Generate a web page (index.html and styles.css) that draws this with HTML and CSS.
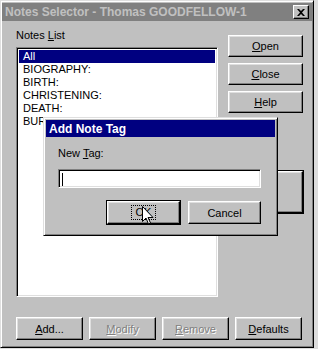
FILE: index.html
```html
<!DOCTYPE html>
<html lang="en">
<head>
    <meta charset="UTF-8">
    <title>Notes Selector</title>
    <link rel="stylesheet" href="styles.css">
</head>
<body>
    <div class="window">
        <div class="titlebar inactive">
            <span class="title">Notes Selector - Thomas GOODFELLOW-1</span>
            <span class="close-btn">
                <svg width="8" height="7" viewBox="0 0 8 7"><path d="M0 0h2l2 2 2-2h2L5 3.5 8 7H6L4 5 2 7H0l3-3.5z" fill="#000"/></svg>
            </span>
        </div>
        <div class="body">
            <div class="main">
                <div class="list-col">
                    <div class="label">Notes <u>L</u>ist</div>
                    <div class="listbox sunken">
                        <div class="item selected">All</div>
                        <div class="item">BIOGRAPHY:</div>
                        <div class="item">BIRTH:</div>
                        <div class="item">CHRISTENING:</div>
                        <div class="item">DEATH:</div>
                        <div class="item">BUR</div>
                    </div>
                </div>
                <div class="btn-col">
                    <div class="btn"><u>O</u>pen</div>
                    <div class="btn"><u>C</u>lose</div>
                    <div class="btn"><u>H</u>elp</div>
                    <div class="btn hidden-btn"></div>
                </div>
            </div>
            <div class="bottom-row">
                <div class="btn"><u>A</u>dd...</div>
                <div class="btn disabled"><u>M</u>odify</div>
                <div class="btn disabled"><u>R</u>emove</div>
                <div class="btn"><u>D</u>efaults</div>
            </div>
        </div>

        <div class="dialog">
            <div class="titlebar active">
                <span class="title">Add Note Tag</span>
            </div>
            <div class="dialog-body">
                <div class="label">New <u>T</u>ag:</div>
                <div class="textbox sunken"><span class="caret"></span></div>
                <div class="dialog-buttons">
                    <div class="btn default"><span class="focus">OK</span></div>
                    <div class="btn">Cancel</div>
                </div>
            </div>
        </div>

        <svg class="cursor" width="12" height="20" viewBox="0 0 12 20">
            <path d="M0.5 0.5v15l3.5-3.5 2.5 6 2-1-2.5-5.5h5z" fill="#fff" stroke="#000" stroke-width="1"/>
        </svg>
    </div>
</body>
</html>
```

FILE: styles.css
```css
* {
    margin: 0;
    padding: 0;
    box-sizing: border-box;
}

body {
    font-family: 'Liberation Sans', Arial, sans-serif;
    font-size: 11px;
    color: #000;
    background: #dcdcdc;
    width: 318px;
    height: 349px;
    overflow: hidden;
}

u {
    text-decoration: underline;
    text-underline-offset: 1px;
}

.window {
    position: relative;
    width: 314px;
    height: 348px;
    background: #c0c0c0;
    padding: 2px;
    border-top: 1px solid #dfdfdf;
    border-left: 1px solid #dfdfdf;
    border-right: 1px solid #000;
    border-bottom: 1px solid #000;
    box-shadow: inset 1px 1px #fff, inset -1px -1px #808080;
    display: flex;
    flex-direction: column;
}

.titlebar {
    height: 18px;
    display: flex;
    align-items: center;
    justify-content: space-between;
    padding: 0 3px 0 3px;
    font-weight: bold;
    font-size: 12px;
    flex-shrink: 0;
}

.titlebar.inactive {
    background: #808080;
    color: #c0c0c0;
    margin: 0 -1px 0 -1px;
}

.titlebar.active {
    background: #000080;
    color: #fff;
    height: 17px;
    font-size: 12px;
}

.close-btn {
    width: 16px;
    height: 14px;
    background: #c0c0c0;
    border-top: 1px solid #fff;
    border-left: 1px solid #fff;
    border-right: 1px solid #000;
    border-bottom: 1px solid #000;
    box-shadow: inset -1px -1px #808080;
    display: flex;
    align-items: center;
    justify-content: center;
}

.body {
    flex: 1;
    padding: 8px 8px 0 13px;
    display: flex;
    flex-direction: column;
}

.main {
    display: grid;
    grid-template-columns: 202px 75px;
    column-gap: 10px;
}

.label {
    line-height: 13px;
    height: 13px;
}

.list-col .label {
    margin-bottom: 5px;
}

.sunken {
    background: #fff;
    border-top: 1px solid #808080;
    border-left: 1px solid #808080;
    border-right: 1px solid #fff;
    border-bottom: 1px solid #fff;
    box-shadow: inset 1px 1px #000, inset -1px -1px #dfdfdf;
}

.listbox {
    height: 250px;
    padding: 2px 2px;
}

.item {
    height: 13px;
    line-height: 13px;
    padding-left: 4px;
    font-size: 11px;
}

.item.selected {
    background: #000080;
    color: #fff;
}

.btn-col {
    padding-top: 6px;
    display: flex;
    flex-direction: column;
    gap: 6px;
}

.btn {
    height: 22px;
    display: flex;
    align-items: center;
    justify-content: center;
    background: #c0c0c0;
    border-top: 1px solid #fff;
    border-left: 1px solid #fff;
    border-right: 1px solid #000;
    border-bottom: 1px solid #000;
    box-shadow: inset -1px -1px #808080, inset 1px 1px #dfdfdf;
}

.btn.disabled {
    color: #808080;
    text-shadow: 1px 1px #fff;
}

.hidden-btn {
    margin-top: 52px;
    height: 42px;
    outline: 1px solid #000;
}

.bottom-row {
    margin-top: 20px;
    display: flex;
    gap: 6px;
}

.bottom-row .btn {
    width: 67px;
    height: 23px;
}

.dialog {
    position: absolute;
    left: 42px;
    top: 116px;
    width: 235px;
    height: 119px;
    background: #c0c0c0;
    padding: 2px;
    border-top: 1px solid #dfdfdf;
    border-left: 1px solid #dfdfdf;
    border-right: 1px solid #000;
    border-bottom: 1px solid #000;
    box-shadow: inset 1px 1px #fff, inset -1px -1px #808080;
}

.dialog-body {
    padding: 10px 0 0 12px;
}

.textbox {
    margin-top: 9px;
    width: 203px;
    height: 19px;
    padding: 3px 3px;
}

.caret {
    display: block;
    width: 1px;
    height: 13px;
    background: #000;
}

.dialog-buttons {
    margin-top: 13px;
    width: 203px;
    display: flex;
    justify-content: flex-end;
    gap: 8px;
}

.dialog-buttons .btn {
    width: 73px;
    height: 23px;
}

.btn.default {
    outline: 1px solid #000;
    outline-offset: 0;
}

.focus {
    padding: 0 4px;
    outline: 1px dotted #000;
    line-height: 13px;
}

.cursor {
    position: absolute;
    left: 141px;
    top: 205px;
}
```
